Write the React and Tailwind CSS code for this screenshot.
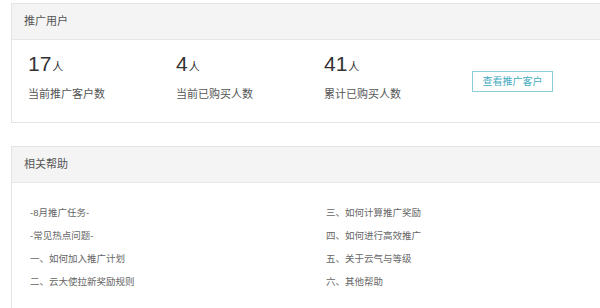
const stats = [
  { value: '17', label: '当前推广客户数' },
  { value: '4', label: '当前已购买人数' },
  { value: '41', label: '累计已购买人数' },
];

const helpLeft = ['-8月推广任务-', '-常见热点问题-', '一、如何加入推广计划', '二、云大使拉新奖励规则'];
const helpRight = ['三、如何计算推广奖励', '四、如何进行高效推广', '五、关于云气与等级', '六、其他帮助'];

function Card({ title, className = '', children }) {
  return (
    <div className={`ml-[11px] w-[600px] border border-[#e4e4e4] bg-white ${className}`}>
      <div className="h-[36px] flex items-center pl-[12px] bg-[#f4f4f4] border-b border-[#e6e6e6] text-[11px] text-[#555]">
        {title}
      </div>
      {children}
    </div>
  );
}

export default function App() {
  return (
    <div
      className="w-[600px] h-[308px] overflow-hidden bg-white pt-[3px]"
      style={{ fontFamily: '"Liberation Sans", "Noto Sans CJK SC", sans-serif' }}
    >
      <Card title="推广用户">
        <div className="flex items-center pl-[16px] pt-[12px] pb-[19px]">
          {stats.map((s) => (
            <div key={s.label} className="w-[148px]">
              <div className="h-[24px] flex items-baseline text-[#333]">
                <span className="text-[21px] leading-[24px]">{s.value}</span>
                <span className="text-[11px] ml-[1px]">人</span>
              </div>
              <div className="mt-[9px] text-[11px] leading-[18px] text-[#555]">{s.label}</div>
            </div>
          ))}
          <button
            type="button"
            className="mt-[7px] w-[81px] h-[21px] border border-[#8ccfdb] text-[10px] text-[#45abc1] flex items-center justify-center"
          >
            查看推广客户
          </button>
        </div>
      </Card>

      <Card title="相关帮助" className="mt-[23px] h-[200px]">
        <div className="flex pt-[18px] pl-[18px] text-[9.5px] text-[#666]">
          <div className="w-[296px]">
            {helpLeft.map((t) => (
              <div key={t} className="h-[23px] leading-[23px]">{t}</div>
            ))}
          </div>
          <div>
            {helpRight.map((t) => (
              <div key={t} className="h-[23px] leading-[23px]">{t}</div>
            ))}
          </div>
        </div>
      </Card>
    </div>
  );
}
